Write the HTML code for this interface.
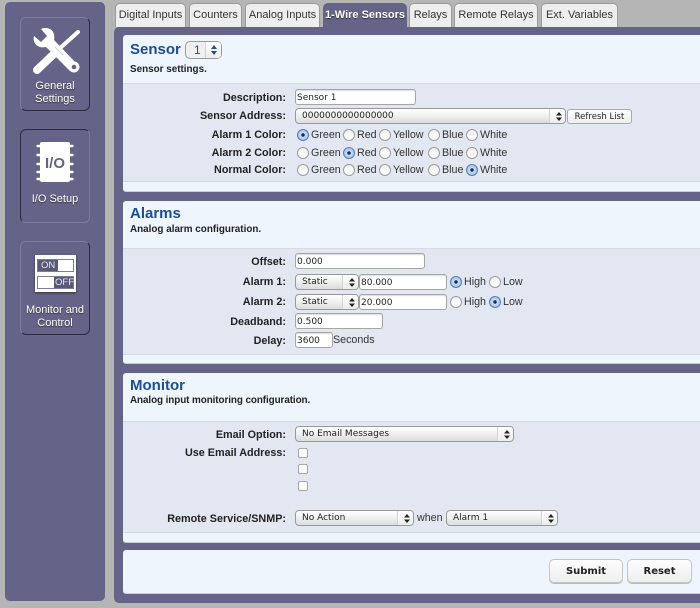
<!DOCTYPE html>
<html><head><meta charset="utf-8"><style>
html,body{margin:0;padding:0}
body{width:700px;height:608px;overflow:hidden;position:relative;background:#b5b5b5;font:11px "Liberation Sans",sans-serif;color:#222}
#w{position:absolute;left:0;top:0;width:700px;height:608px;filter:blur(.3px);overflow:hidden}
#w div,#w span{position:absolute;box-sizing:border-box;white-space:nowrap}
.side{left:5px;top:2px;width:100px;height:599px;background:#656387;border-radius:5px}
.nav{left:20px;width:70px;height:94px;border:1px solid #7c7a9e;border-right-color:#2b2a40;border-bottom-color:#2b2a40;border-radius:6px;background:#656387}
.nav.on{border-color:#2b2a40;border-right-color:#7c7a9e;border-bottom-color:#7c7a9e}
.nt{left:0;width:68px;text-align:center;color:#fff;font-size:11px;line-height:12.5px;text-shadow:0 1px 1px #333}
.main{left:114px;top:27px;width:590px;height:576px;background:#656387;border-radius:5px 0 0 5px}
.tab{top:3px;height:24px;background:#eeeeee;border:1px solid #999;border-bottom:0;border-radius:5px 5px 0 0;text-align:center;line-height:23px;font-size:11px;color:#333}
.tab.on{background:#656387;border-color:#656387;color:#fff;font-weight:bold;text-shadow:0 1px 1px #333}
.p{left:123px;width:590px;background:#eff5fd;border-radius:3px 0 0 3px;border-bottom:1px solid #c9ced9}
.b{left:123px;width:590px;background:#e2e7f1;border-top:1px solid #d6dbe5;border-bottom:1px solid #d0d5e0}
.h{left:130px;font-size:15px;font-weight:bold;color:#1c4d9c;line-height:18px}
.s{left:130px;font-size:9.9px;font-weight:bold;color:#222;line-height:12px}
.l{right:414px;font-size:10.8px;font-weight:bold;color:#222;line-height:14px;text-align:right}
.i{height:16px;background:#fff;border:1px solid #a5a5a5;border-radius:3px;font:9px "DejaVu Sans",sans-serif;line-height:16px;padding-left:1px;color:#222;box-shadow:inset 0 1px 1px #ddd}
.sel{height:16px;border:1px solid #999;border-radius:4px;background:linear-gradient(#fff,#f1f1f1 45%,#dcdcdc);font:9px "DejaVu Sans",sans-serif;line-height:15px;padding-left:6px;color:#222}
.sel:after{content:"";position:absolute;right:0;top:0;width:15px;height:100%;border-left:1px solid #d4d4d4;border-radius:0 3px 3px 0;background:linear-gradient(#fff,#ececec)}
.ar{position:absolute;right:3px;top:3px;width:6px;height:9px;z-index:2}
.r{width:12px;height:12px;border-radius:50%;border:1px solid #9a9a9a;background:linear-gradient(#f2f2f2,#fff)}
.r.c{background:radial-gradient(circle,#1c2c55 0 1.6px,#cfe2f8 2px,#8db8ea 6px);border-color:#5a7fb4}
.t{font-size:10.7px;line-height:14px;color:#333}
.cb{left:298px;width:10px;height:10px;background:#fbfbfb;border:1px solid #a5a5a5;border-radius:2px}
.btn{height:24px;top:559px;border:1px solid #c4c4c4;border-radius:5px;background:linear-gradient(#fdfdfd,#eee);text-align:center;font:bold 10px "DejaVu Sans",sans-serif;line-height:23px;color:#222;box-shadow:0 1px 0 #bbb}
</style></head><body><div id="w">

<div class="side"></div>
<div class="nav" style="top:17px">
<svg style="position:absolute;left:10px;top:9px" width="50" height="50" viewBox="0 0 50 50">
<path d="M6 43 L27 23" stroke="#fff" stroke-width="8" stroke-linecap="round"/>
<path d="M27 23 L47 5" stroke="#fff" stroke-width="4" stroke-linecap="round"/>
<path d="M10 2 C17 -1 25 3 23 13 L46 37 L39 44 L15 20 C7 22 1 16 3 9 L10 15 L16 9Z" fill="#fff"/>
<path d="M24 20 L32 28" stroke="#cfcfe0" stroke-width="1.2"/>
<circle cx="43" cy="40" r="5.5" fill="#fff"/><circle cx="43" cy="40" r="2.3" fill="#656387"/>
</svg>
<div class="nt" style="top:62px">General<br>Settings</div></div>
<div class="nav on" style="top:129px">
<svg style="position:absolute;left:15px;top:12px" width="38" height="42" viewBox="0 0 38 42">
<g stroke="#fff" stroke-width="2.4" stroke-linecap="round"><path d="M1.5 4H36.5M1.5 13H36.5M1.5 22H36.5M1.5 30H36.5M1.5 37H36.5"/></g>
<rect x="4" y="0" width="30" height="40" rx="2" fill="#fff"/>
<text x="19" y="26" text-anchor="middle" font-family="Liberation Sans" font-weight="bold" font-size="15" fill="#656387">I/O</text>
</svg>
<div class="nt" style="top:63px">I/O Setup</div></div>
<div class="nav" style="top:241px">
<div style="left:14px;top:13px;width:41px;height:37px;background:#fff;box-shadow:0 1px 2px #333"></div>
<div style="left:16px;top:17px;width:37px;height:13px;background:#5a5878;border:1px solid #7c7a9e"></div>
<div style="left:37px;top:18px;width:15px;height:11px;background:#fff"></div>
<div style="left:20px;top:17px;width:16px;height:13px;color:#e8e8f0;font-size:9.5px;line-height:13px">ON</div>
<div style="left:16px;top:34px;width:37px;height:13px;background:#5a5878;border:1px solid #7c7a9e"></div>
<div style="left:17px;top:35px;width:16px;height:11px;background:#fff"></div>
<div style="left:34px;top:34px;width:19px;height:13px;color:#e8e8f0;font-size:9.5px;line-height:13px">OFF</div>
<div class="nt" style="top:62px">Monitor and<br>Control</div></div>

<div class="main"></div>
<div class="tab" style="left:115px;width:71px">Digital Inputs</div>
<div class="tab" style="left:189px;width:53px">Counters</div>
<div class="tab" style="left:245px;width:75px">Analog Inputs</div>
<div class="tab on" style="left:323px;width:84px">1-Wire Sensors</div>
<div class="tab" style="left:409px;width:43px">Relays</div>
<div class="tab" style="left:454px;width:84px">Remote Relays</div>
<div class="tab" style="left:541px;width:77px">Ext. Variables</div>

<!-- Sensor -->
<div class="p" style="top:35px;height:157px"></div>
<div class="b" style="top:83px;height:99px"></div>
<div class="h" style="top:41px">Sensor</div>
<div class="sel" style="left:185px;top:41px;width:37px;height:18px;border-radius:5px;font:12px 'Liberation Sans';color:#1c4d9c;line-height:16px;padding-left:8px;background:#f0f0f0">1<svg class="ar" style="right:3px;top:2px;width:8px;height:12px" viewBox="0 0 8 12"><path d="M4 1L7 5H1ZM4 11L7 7H1Z" fill="#1c4d9c"/></svg></div>
<div class="s" style="top:64px">Sensor settings.</div>
<div class="l" style="top:91px">Description:</div>
<div class="i" style="left:295px;top:89px;width:121px">Sensor 1</div>
<div class="l" style="top:109px">Sensor Address:</div>
<div class="sel" style="left:295px;top:108px;width:271px">0000000000000000<svg class="ar" viewBox="0 0 6 9"><path d="M3 0L6 3.5H0ZM3 9L6 5.5H0Z" fill="#222"/></svg></div>
<div class="btn" style="left:567px;top:109px;width:65px;height:15px;font:8.5px 'DejaVu Sans';line-height:14px;border-radius:3px;box-shadow:none;border-color:#aaa">Refresh List</div>

<div class="l" style="top:128px">Alarm 1 Color:</div>
<div class="r c" style="left:297px;top:129px"></div><div class="t" style="left:311px;top:128px">Green</div>
<div class="r" style="left:343px;top:129px"></div><div class="t" style="left:357px;top:128px">Red</div>
<div class="r" style="left:379px;top:129px"></div><div class="t" style="left:393px;top:128px">Yellow</div>
<div class="r" style="left:428px;top:129px"></div><div class="t" style="left:442px;top:128px">Blue</div>
<div class="r" style="left:466px;top:129px"></div><div class="t" style="left:480px;top:128px">White</div>

<div class="l" style="top:146px">Alarm 2 Color:</div>
<div class="r" style="left:297px;top:147px"></div><div class="t" style="left:311px;top:146px">Green</div>
<div class="r c" style="left:343px;top:147px"></div><div class="t" style="left:357px;top:146px">Red</div>
<div class="r" style="left:379px;top:147px"></div><div class="t" style="left:393px;top:146px">Yellow</div>
<div class="r" style="left:428px;top:147px"></div><div class="t" style="left:442px;top:146px">Blue</div>
<div class="r" style="left:466px;top:147px"></div><div class="t" style="left:480px;top:146px">White</div>

<div class="l" style="top:163px">Normal Color:</div>
<div class="r" style="left:297px;top:164px"></div><div class="t" style="left:311px;top:163px">Green</div>
<div class="r" style="left:343px;top:164px"></div><div class="t" style="left:357px;top:163px">Red</div>
<div class="r" style="left:379px;top:164px"></div><div class="t" style="left:393px;top:163px">Yellow</div>
<div class="r" style="left:428px;top:164px"></div><div class="t" style="left:442px;top:163px">Blue</div>
<div class="r c" style="left:466px;top:164px"></div><div class="t" style="left:480px;top:163px">White</div>

<!-- Alarms -->
<div class="p" style="top:201px;height:163px"></div>
<div class="b" style="top:248px;height:107px"></div>
<div class="h" style="top:205px">Alarms</div>
<div class="s" style="top:224px">Analog alarm configuration.</div>
<div class="l" style="top:255px">Offset:</div>
<div class="i" style="left:295px;top:253px;width:130px">0.000</div>
<div class="l" style="top:275px">Alarm 1:</div>
<div class="sel" style="left:295px;top:274px;width:64px">Static<svg class="ar" viewBox="0 0 6 9"><path d="M3 0L6 3.5H0ZM3 9L6 5.5H0Z" fill="#222"/></svg></div>
<div class="i" style="left:359px;top:274px;width:88px">80.000</div>
<div class="r c" style="left:450px;top:276px"></div><div class="t" style="left:464px;top:275px">High</div>
<div class="r" style="left:489px;top:276px"></div><div class="t" style="left:503px;top:275px">Low</div>
<div class="l" style="top:295px">Alarm 2:</div>
<div class="sel" style="left:295px;top:294px;width:64px">Static<svg class="ar" viewBox="0 0 6 9"><path d="M3 0L6 3.5H0ZM3 9L6 5.5H0Z" fill="#222"/></svg></div>
<div class="i" style="left:359px;top:294px;width:88px">20.000</div>
<div class="r" style="left:450px;top:296px"></div><div class="t" style="left:464px;top:295px">High</div>
<div class="r c" style="left:489px;top:296px"></div><div class="t" style="left:503px;top:295px">Low</div>
<div class="l" style="top:315px">Deadband:</div>
<div class="i" style="left:295px;top:313px;width:88px">0.500</div>
<div class="l" style="top:334px">Delay:</div>
<div class="i" style="left:295px;top:332px;width:38px">3600</div>
<div class="t" style="left:333px;top:333px">Seconds</div>

<!-- Monitor -->
<div class="p" style="top:373px;height:170px"></div>
<div class="b" style="top:421px;height:112px"></div>
<div class="h" style="top:377px">Monitor</div>
<div class="s" style="top:395px;letter-spacing:-.08px">Analog input monitoring configuration.</div>
<div class="l" style="top:428px">Email Option:</div>
<div class="sel" style="left:295px;top:426px;width:219px">No Email Messages<svg class="ar" viewBox="0 0 6 9"><path d="M3 0L6 3.5H0ZM3 9L6 5.5H0Z" fill="#222"/></svg></div>
<div class="l" style="top:446px">Use Email Address:</div>
<div class="cb" style="top:448px"></div>
<div class="cb" style="top:464px"></div>
<div class="cb" style="top:481px"></div>
<div class="l" style="top:512px">Remote Service/SNMP:</div>
<div class="sel" style="left:295px;top:510px;width:119px">No Action<svg class="ar" viewBox="0 0 6 9"><path d="M3 0L6 3.5H0ZM3 9L6 5.5H0Z" fill="#222"/></svg></div>
<div class="t" style="left:417px;top:511px">when</div>
<div class="sel" style="left:446px;top:510px;width:112px">Alarm 1<svg class="ar" viewBox="0 0 6 9"><path d="M3 0L6 3.5H0ZM3 9L6 5.5H0Z" fill="#222"/></svg></div>

<!-- Buttons -->
<div class="p" style="top:550px;height:44px"></div>
<div class="btn" style="left:549px;width:74px">Submit</div>
<div class="btn" style="left:627px;width:65px">Reset</div>
</div></body></html>
